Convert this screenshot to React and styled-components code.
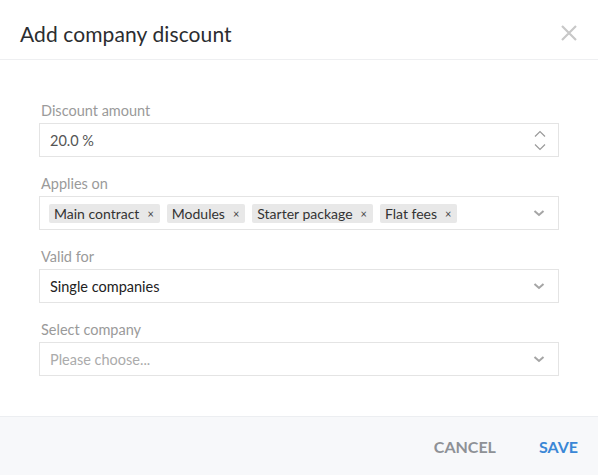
import React from "react";
import styled, { createGlobalStyle } from "styled-components";

const GlobalStyle = createGlobalStyle`
  html, body {
    margin: 0;
    padding: 0;
    background: #fff;
    font-family: "Lato", "Open Sans", sans-serif;
  }
`;

const StModal = styled.div`
  width: 598px;
  height: 475px;
  display: flex;
  flex-direction: column;
  background: #fff;
`;

const StHeader = styled.div`
  height: 60px;
  padding: 8px 20px 0;
  display: flex;
  align-items: center;
  justify-content: space-between;
  border-bottom: 1px solid #eeeff1;
  box-sizing: border-box;
  h2 {
    margin: 0;
    font-size: 21px;
    font-weight: 400;
    color: #2b2d30;
    letter-spacing: 0.1px;
  }
`;

const StClose = styled.button`
  border: 0;
  background: none;
  padding: 0;
  width: 18px;
  height: 18px;
  display: flex;
  cursor: pointer;
  margin-top: -2px;
`;

const StBody = styled.div`
  flex: 1;
  padding: 41px 39px 0;
  display: flex;
  flex-direction: column;
  gap: 17px;
`;

const StField = styled.div`
  display: flex;
  flex-direction: column;
  gap: 2px;
`;

const StLabel = styled.label`
  font-size: 14.5px;
  line-height: 20px;
  color: #9a9a9a;
  padding-left: 2px;
`;

const StBox = styled.div`
  height: 34px;
  box-sizing: border-box;
  border: 1px solid #e4e4e4;
  display: flex;
  align-items: center;
  padding: 0 10px 0 ${(p) => (p.$tags ? "9px" : "10px")};
  font-size: 14.5px;
  color: ${(p) => p.$color || "#555"};
`;

const StValue = styled.span`
  flex: 1;
`;

const StTags = styled.div`
  flex: 1;
  display: flex;
  gap: 7px;
`;

const StTag = styled.span`
  height: 19px;
  background: #e8e8e8;
  border-radius: 2px;
  padding: 0 6px 0 5px;
  display: flex;
  align-items: center;
  gap: 8px;
  font-size: 14px;
  color: #333;
  span {
    font-size: 11px;
    color: #444;
  }
`;

const StSpinner = styled.div`
  display: flex;
  flex-direction: column;
  gap: 5px;
  margin-right: 2px;
`;

const StFooter = styled.div`
  height: 59px;
  box-sizing: border-box;
  background: #f7f8fa;
  border-top: 1px solid #eceef1;
  display: flex;
  align-items: center;
  justify-content: flex-end;
  gap: 43px;
  padding: 0 20px 0 0;
`;

const StButton = styled.button`
  border: 0;
  background: none;
  padding: 0;
  font-family: inherit;
  font-size: 16px;
  font-weight: 700;
  letter-spacing: 0;
  color: ${(p) => (p.$primary ? "#3a87d6" : "#8e9196")};
  cursor: pointer;
`;

const Chevron = ({ up }) => (
  <svg width="12" height="8" viewBox="0 0 12 8">
    <path
      d={up ? "M1 6.5 L6 1.5 L11 6.5" : "M1 1.5 L6 6.5 L11 1.5"}
      fill="none"
      stroke="#9a9a9a"
      strokeWidth="1.2"
    />
  </svg>
);

const SelectArrow = () => (
  <svg width="12" height="8" viewBox="0 0 12 8" style={{ marginRight: 3 }}>
    <path d="M1.5 2 L6 6 L10.5 2" fill="none" stroke="#a5a5a5" strokeWidth="2" />
  </svg>
);

const tags = ["Main contract", "Modules", "Starter package", "Flat fees"];

function App() {
  return (
    <StModal>
      <GlobalStyle />
      <StHeader>
        <h2>Add company discount</h2>
        <StClose aria-label="close">
          <svg width="18" height="18" viewBox="0 0 18 18">
            <path d="M2 2 L16 16 M16 2 L2 16" stroke="#c8c8c8" strokeWidth="2.2" />
          </svg>
        </StClose>
      </StHeader>
      <StBody>
        <StField>
          <StLabel>Discount amount</StLabel>
          <StBox>
            <StValue>20.0 %</StValue>
            <StSpinner>
              <Chevron up />
              <Chevron />
            </StSpinner>
          </StBox>
        </StField>
        <StField>
          <StLabel>Applies on</StLabel>
          <StBox $tags>
            <StTags>
              {tags.map((t) => (
                <StTag key={t}>
                  {t}
                  <span>×</span>
                </StTag>
              ))}
            </StTags>
            <SelectArrow />
          </StBox>
        </StField>
        <StField>
          <StLabel>Valid for</StLabel>
          <StBox $color="#222">
            <StValue>Single companies</StValue>
            <SelectArrow />
          </StBox>
        </StField>
        <StField>
          <StLabel>Select company</StLabel>
          <StBox $color="#ababab">
            <StValue>Please choose...</StValue>
            <SelectArrow />
          </StBox>
        </StField>
      </StBody>
      <StFooter>
        <StButton>CANCEL</StButton>
        <StButton $primary>SAVE</StButton>
      </StFooter>
    </StModal>
  );
}

export default App;
